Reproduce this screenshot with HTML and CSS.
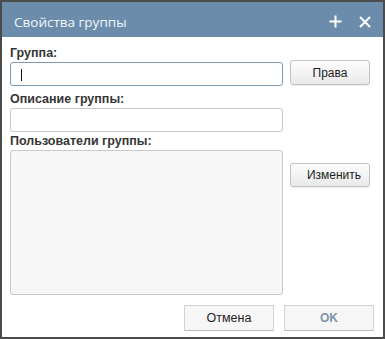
FILE: index.html
```html
<!DOCTYPE html>
<html lang="ru">
<head>
    <meta charset="UTF-8">
    <meta name="viewport" content="width=device-width, initial-scale=1.0">
    <title>Свойства группы</title>
    <link rel="stylesheet" href="styles.css">
</head>
<body>
    <div class="dialog">
        <div class="header">
            <span class="title">Свойства группы</span>
            <div class="tools">
                <svg class="icon" width="13" height="13" viewBox="0 0 13 13">
                    <path d="M6.5 0.5 V12.5 M0.5 6.5 H12.5" stroke="#fff" stroke-width="2" fill="none"/>
                </svg>
                <svg class="icon" width="12" height="12" viewBox="0 0 12 12">
                    <path d="M1 1 L11 11 M11 1 L1 11" stroke="#fff" stroke-width="2" fill="none"/>
                </svg>
            </div>
        </div>

        <div class="form">
            <label class="label first">Группа:</label>
            <div class="field focused"><span class="caret"></span></div>
            <button class="btn side">Права</button>

            <label class="label">Описание группы:</label>
            <div class="field"></div>
            <div></div>

            <label class="label tight">Пользователи группы:</label>
            <div class="list"></div>
            <button class="btn side change">Изменить</button>
        </div>

        <div class="footer">
            <button class="btn-flat">Отмена</button>
            <button class="btn-flat ok">OK</button>
        </div>
    </div>
</body>
</html>
```

FILE: styles.css
```css
body {
    margin: 0;
    padding: 2px;
    background-color: #4b4b4b;
    font-family: "Liberation Sans", Arial, sans-serif;
}
.dialog {
    width: 381px;
    height: 335px;
    background-color: #fff;
    display: flex;
    flex-direction: column;
}
.header {
    height: 35px;
    box-sizing: border-box;
    padding: 4px 12px 0 12px;
    background-color: #6b8cab;
    display: flex;
    align-items: center;
    justify-content: space-between;
}
.title {
    color: #f4f7fa;
    font-family: "Open Sans", sans-serif;
    font-size: 13.5px;
}
.tools {
    display: flex;
    align-items: center;
    gap: 17px;
}
.icon {
    display: block;
}
.form {
    display: grid;
    grid-template-columns: 273px 80px;
    column-gap: 7px;
    align-items: start;
    padding: 0 9px 0 8px;
}
.label {
    grid-column: 1 / -1;
    font-size: 12.5px;
    font-weight: bold;
    line-height: 14px;
    color: #363636;
    margin: 6px 0 2px 0;
}
.label.first {
    margin-top: 9px;
}
.label.tight {
    margin-top: 2px;
}
.field {
    height: 24px;
    box-sizing: border-box;
    border: 1px solid #c9c9c9;
    border-radius: 3px;
    background-color: #fff;
    padding: 6px 10px;
}
.field.focused {
    border-color: #7d98b3;
}
.caret {
    display: block;
    width: 1px;
    height: 12px;
    background-color: #111;
}
.list {
    height: 145px;
    box-sizing: border-box;
    border: 1px solid #c9c9c9;
    border-radius: 3px;
    background-color: #f7f7f7;
}
.btn {
    height: 25px;
    box-sizing: border-box;
    border: 1px solid #c3c3c3;
    border-radius: 3px;
    background: linear-gradient(#fdfdfd, #e9e9e9);
    box-shadow: 0 1px 1px rgba(0,0,0,0.08);
    font-family: "Liberation Sans", Arial, sans-serif;
    font-size: 12px;
    color: #1e1e1e;
    padding: 0;
}
.side {
    margin-top: -2px;
}
.change {
    margin-top: 13px;
    height: 24px;
    padding-left: 8px;
}
.footer {
    display: flex;
    justify-content: flex-end;
    gap: 10px;
    padding: 10px 9px 0 0;
}
.btn-flat {
    width: 90px;
    height: 26px;
    box-sizing: border-box;
    border: 1px solid #d2d2d2;
    border-bottom-color: #bcbcbc;
    background-color: #f6f6f6;
    font-family: "Liberation Sans", Arial, sans-serif;
    font-size: 12.5px;
    color: #1e1e1e;
    padding: 0;
}
.ok {
    font-size: 12px;
    font-weight: bold;
    color: #7e93a8;
}
```
